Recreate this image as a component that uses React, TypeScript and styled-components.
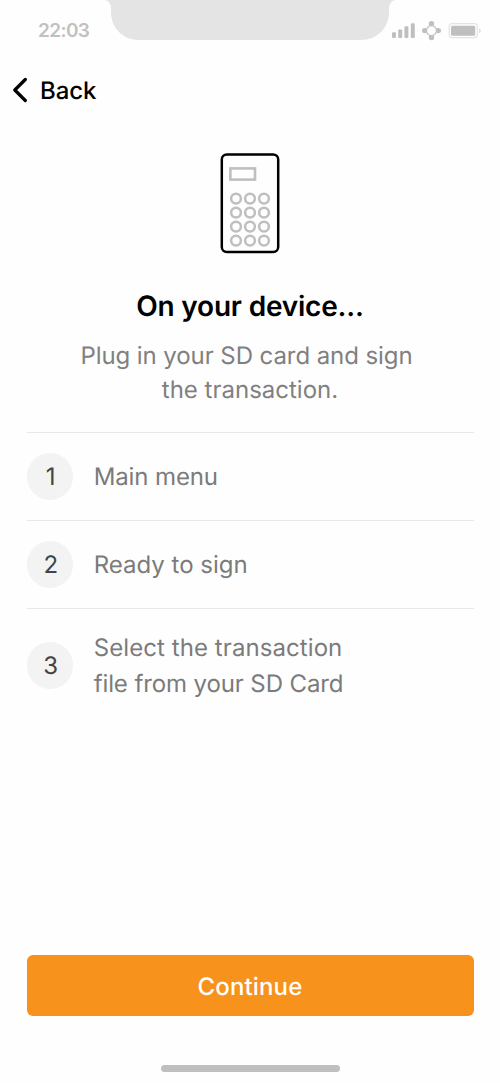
import React from "react";
import styled, { createGlobalStyle } from "styled-components";

const GlobalStyle = createGlobalStyle`
  *, *::before, *::after { box-sizing: border-box; }
  body {
    margin: 0;
    background: #fefefe;
    font-family: Inter, "Liberation Sans", sans-serif;
    text-rendering: geometricPrecision;
  }
`;

const Screen = styled.div`
  display: flex;
  flex-direction: column;
  width: 500px;
  height: 1083px;
  overflow: hidden;
  background: #fefefe;
`;

const StatusBar = styled.header`
  display: flex;
  justify-content: space-between;
  height: 60px;
  flex: none;
`;

const Clock = styled.time`
  width: 102px;
  padding: 18px 0 0 38px;
  font-size: 19px;
  font-weight: 600;
  line-height: 25px;
  letter-spacing: -0.6px;
  color: #c1c1c1;
  white-space: nowrap;
`;

const Notch = styled.svg`
  display: block;
  flex: none;
`;

const StatusIcons = styled.svg`
  display: block;
  flex: none;
`;

const BackButton = styled.button`
  display: flex;
  align-items: center;
  align-self: flex-start;
  gap: 13px;
  height: 60px;
  padding: 0 0 0 12px;
  border: 0;
  background: none;
  color: #000;
  font: 500 24px/30px Inter, "Liberation Sans", sans-serif;
  letter-spacing: -0.1px;
  text-rendering: geometricPrecision;
`;

const BackLabel = styled.span`
  padding-top: 1px;
`;

const Intro = styled.section`
  display: flex;
  flex-direction: column;
  align-items: center;
  padding-top: 33px;
`;

const Title = styled.h1`
  margin: 34px 0 0;
  font-size: 28px;
  font-weight: 600;
  line-height: 36px;
  letter-spacing: -0.2px;
  color: #000;
`;

const Lead = styled.p`
  margin: 15px 0 0;
  font-size: 24px;
  line-height: 33.5px;
  text-align: center;
  color: #808080;
  white-space: nowrap;
`;

const Line = styled.span<{ $shift?: number; $tracking?: number }>`
  display: block;
  padding-right: ${(p) => p.$shift ?? 0}px;
  letter-spacing: ${(p) => p.$tracking ?? 0}px;
`;

const Steps = styled.ol`
  margin: 26px 26.5px 0;
  padding: 0;
  list-style: none;
`;

const Step = styled.li<{ $tall?: boolean }>`
  display: flex;
  align-items: center;
  gap: 20.7px;
  height: ${(p) => (p.$tall ? 114 : 88)}px;
  border-top: 1px solid #e8e8e8;
`;

const StepNumber = styled.span`
  display: flex;
  align-items: center;
  justify-content: center;
  width: 46.5px;
  height: 47px;
  padding-left: 2px;
  border-radius: 50%;
  background: #f3f3f3;
  color: #444;
  font-size: 24px;
  line-height: 36px;
`;

const StepText = styled.span`
  font-size: 24px;
  line-height: 36px;
  color: #7b7b7b;
  white-space: nowrap;
`;

const Footer = styled.footer`
  display: flex;
  flex-direction: column;
  align-items: center;
  margin-top: auto;
  padding: 0 26.5px 11px;
`;

const ContinueButton = styled.button`
  width: 100%;
  height: 61.5px;
  padding: 3px 0 0;
  border: 0;
  border-radius: 6px;
  background: #f7931c;
  color: #fff;
  font: 450 24px/30px Inter, "Liberation Sans", sans-serif;
  letter-spacing: 0.15px;
  text-rendering: geometricPrecision;
`;

const HomeIndicator = styled.div`
  width: 179px;
  height: 7px;
  margin-top: 49px;
  border-radius: 4px;
  background: #bfbfbf;
`;

const KEY_ROWS = [198.6, 212.6, 226.6, 240.6];
const KEY_COLS = [236, 250, 264];

const DeviceIcon = () => (
  <svg width="60" height="101" viewBox="220 153 60 101" fill="none">
    <rect x="221.8" y="154.4" width="56.4" height="97.6" rx="5" stroke="#000" strokeWidth="2.5" />
    <rect x="230.4" y="168.4" width="24.6" height="11.2" stroke="#bfbfbf" strokeWidth="2.6" />
    {KEY_ROWS.map((cy) =>
      KEY_COLS.map((cx) => (
        <circle key={`${cx}-${cy}`} cx={cx} cy={cy} r="4.9" stroke="#bfbfbf" strokeWidth="2.5" />
      )),
    )}
  </svg>
);

export default function App() {
  return (
    <Screen>
      <GlobalStyle />
      <StatusBar>
        <Clock>22:03</Clock>
        <Notch width="288" height="60" viewBox="102 0 288 60">
          <path
            d="M104 0C109 0 111 4 111 9V12C111 28 123 40 139 40H361C377 40 389 28 389 12V9C389 4 391 0 396 0Z"
            fill="#e4e4e4"
          />
        </Notch>
        <StatusIcons width="110" height="60" viewBox="390 0 110 60">
          <path d="M390 0H396C393 0 391 1.8 390 4.4Z" fill="#e4e4e4" />
          <g fill="#bfbfbf">
            <rect x="392" y="32.3" width="4" height="5.7" rx="1.2" />
            <rect x="398.2" y="29.5" width="4" height="8.5" rx="1.2" />
            <rect x="404.4" y="26.3" width="4" height="11.7" rx="1.2" />
            <rect x="410.8" y="23.3" width="4" height="14.7" rx="1.2" />
            <circle cx="431.5" cy="23.7" r="2.7" />
            <circle cx="431.5" cy="37.5" r="2.7" />
            <circle cx="424.7" cy="30.6" r="2.7" />
            <circle cx="438.3" cy="30.6" r="2.7" />
            <rect x="451" y="25.8" width="24.2" height="9.9" rx="1.5" />
          </g>
          <circle cx="431.5" cy="30.6" r="5" fill="#fefefe" stroke="#bfbfbf" strokeWidth="1.2" />
          <rect x="449.2" y="23.7" width="28.2" height="13.9" rx="3" fill="none" stroke="#e4e4e4" strokeWidth="1.2" />
          <path d="M479 28.3Q480.8 29 480.8 30.7T479 33.2Z" fill="#e0e0e0" />
        </StatusIcons>
      </StatusBar>

      <BackButton>
        <svg width="15" height="26" viewBox="12 76.5 15 26" fill="none">
          <path d="M25.3 79L14.8 89.5L25.3 100" stroke="#000" strokeWidth="3.2" strokeLinecap="round" strokeLinejoin="round" />
        </svg>
        <BackLabel>Back</BackLabel>
      </BackButton>

      <Intro>
        <DeviceIcon />
        <Title>On your device...</Title>
        <Lead>
          <Line $shift={7} $tracking={-0.08}>Plug in your SD card and sign</Line>
          <Line>the transaction.</Line>
        </Lead>
      </Intro>

      <Steps>
        <Step>
          <StepNumber>1</StepNumber>
          <StepText>
            <Line $tracking={-0.12}>Main menu</Line>
          </StepText>
        </Step>
        <Step>
          <StepNumber>2</StepNumber>
          <StepText>
            <Line>Ready to sign</Line>
          </StepText>
        </Step>
        <Step $tall>
          <StepNumber>3</StepNumber>
          <StepText>
            <Line $tracking={0.08}>Select the transaction</Line>
            <Line $tracking={-0.11}>file from your SD Card</Line>
          </StepText>
        </Step>
      </Steps>

      <Footer>
        <ContinueButton>Continue</ContinueButton>
        <HomeIndicator />
      </Footer>
    </Screen>
  );
}
